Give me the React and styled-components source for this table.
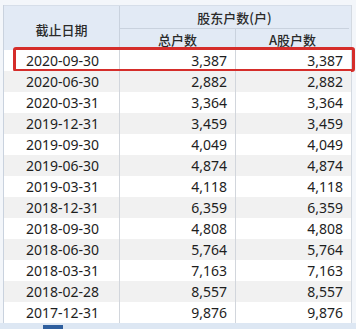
import React from "react";
import styled, { createGlobalStyle } from "styled-components";

const Global = createGlobalStyle`
  html, body { margin: 0; padding: 0; background: #ffffff; }
  body { font-family: "Noto Sans", "Noto Sans CJK SC", sans-serif; }
`;

const Page = styled.div`
  width: 356px;
  height: 329px;
  overflow: hidden;
  background: #f3f6fa;
  display: flex;
  flex-direction: column;
`;

const Table = styled.div`
  margin: 5px 0 0 3px;
  width: 347px;
  border-left: 1px solid #c9d2de;
  border-right: 1px solid #d3d9e1;
  display: flex;
  flex-direction: column;
`;

const Head = styled.div`
  display: grid;
  grid-template-columns: 115px 116px 114px;
  grid-template-rows: 23px 21px;
  background: #e2eaf5;
  border-top: 1px solid #d6dee9;
  color: #2a2a2a;
  font-family: "Noto Sans CJK SC", sans-serif;
  font-size: 13px;
  font-weight: 500;
`;

const HeadCell = styled.div`
  display: flex;
  align-items: center;
  justify-content: center;
  grid-column: ${(p) => p.$col || "auto"};
  grid-row: ${(p) => p.$row || "auto"};
  border-left: ${(p) => (p.$divider ? "1px solid #c9d2de" : "none")};
  border-bottom: ${(p) => (p.$under ? "1px solid #c9d2de" : "none")};
  padding-top: ${(p) => p.$pt || 0}px;
`;

const Body = styled.div`
  display: flex;
  flex-direction: column;
`;

const Row = styled.div`
  position: relative;
  display: grid;
  grid-template-columns: 115px 116px 114px;
  height: 21px;
  background: ${(p) => (p.$alt ? "#f1f1f1" : "#ffffff")};
  color: #1e1e1e;
  font-size: 14px;
  line-height: 21px;
`;

const DateCell = styled.div`
  padding-left: 22px;
`;

const NumCell = styled.div`
  text-align: right;
  padding-right: ${(p) => p.$pr}px;
  border-left: 1px solid #d2d6dc;
`;

const Highlight = styled.div`
  position: absolute;
  left: 9px;
  right: -4px;
  top: -3px;
  bottom: -1px;
  border: 3px solid #d52d2a;
  border-radius: 3px;
  pointer-events: none;
`;

const Footer = styled.div`
  flex: 1;
  background: #dde7f3;
  display: flex;
  align-items: flex-end;
  padding-left: 43px;
`;

const Thumb = styled.div`
  width: 20px;
  height: 4px;
  background: #2f5f9e;
`;

const data = [
  ["2020-09-30", "3,387", "3,387"],
  ["2020-06-30", "2,882", "2,882"],
  ["2020-03-31", "3,364", "3,364"],
  ["2019-12-31", "3,459", "3,459"],
  ["2019-09-30", "4,049", "4,049"],
  ["2019-06-30", "4,874", "4,874"],
  ["2019-03-31", "4,118", "4,118"],
  ["2018-12-31", "6,359", "6,359"],
  ["2018-09-30", "4,808", "4,808"],
  ["2018-06-30", "5,764", "5,764"],
  ["2018-03-31", "7,163", "7,163"],
  ["2018-02-28", "8,557", "8,557"],
  ["2017-12-31", "9,876", "9,876"],
];

export default function App() {
  return (
    <>
      <Global />
      <Page>
        <Table>
          <Head>
            <HeadCell $col="1" $row="1 / span 2" $pt={2}>截止日期</HeadCell>
            <HeadCell $col="2 / span 2" $row="1" $divider $under>股东户数(户)</HeadCell>
            <HeadCell $col="2" $row="2" $divider>总户数</HeadCell>
            <HeadCell $col="3" $row="2" $divider>A股户数</HeadCell>
          </Head>
          <Body>
            {data.map((r, i) => (
              <Row key={r[0]} $alt={i % 2 === 1}>
                <DateCell>{r[0]}</DateCell>
                <NumCell $pr={8}>{r[1]}</NumCell>
                <NumCell $pr={6}>{r[2]}</NumCell>
                {i === 0 && <Highlight />}
              </Row>
            ))}
          </Body>
        </Table>
        <Footer>
          <Thumb />
        </Footer>
      </Page>
    </>
  );
}
